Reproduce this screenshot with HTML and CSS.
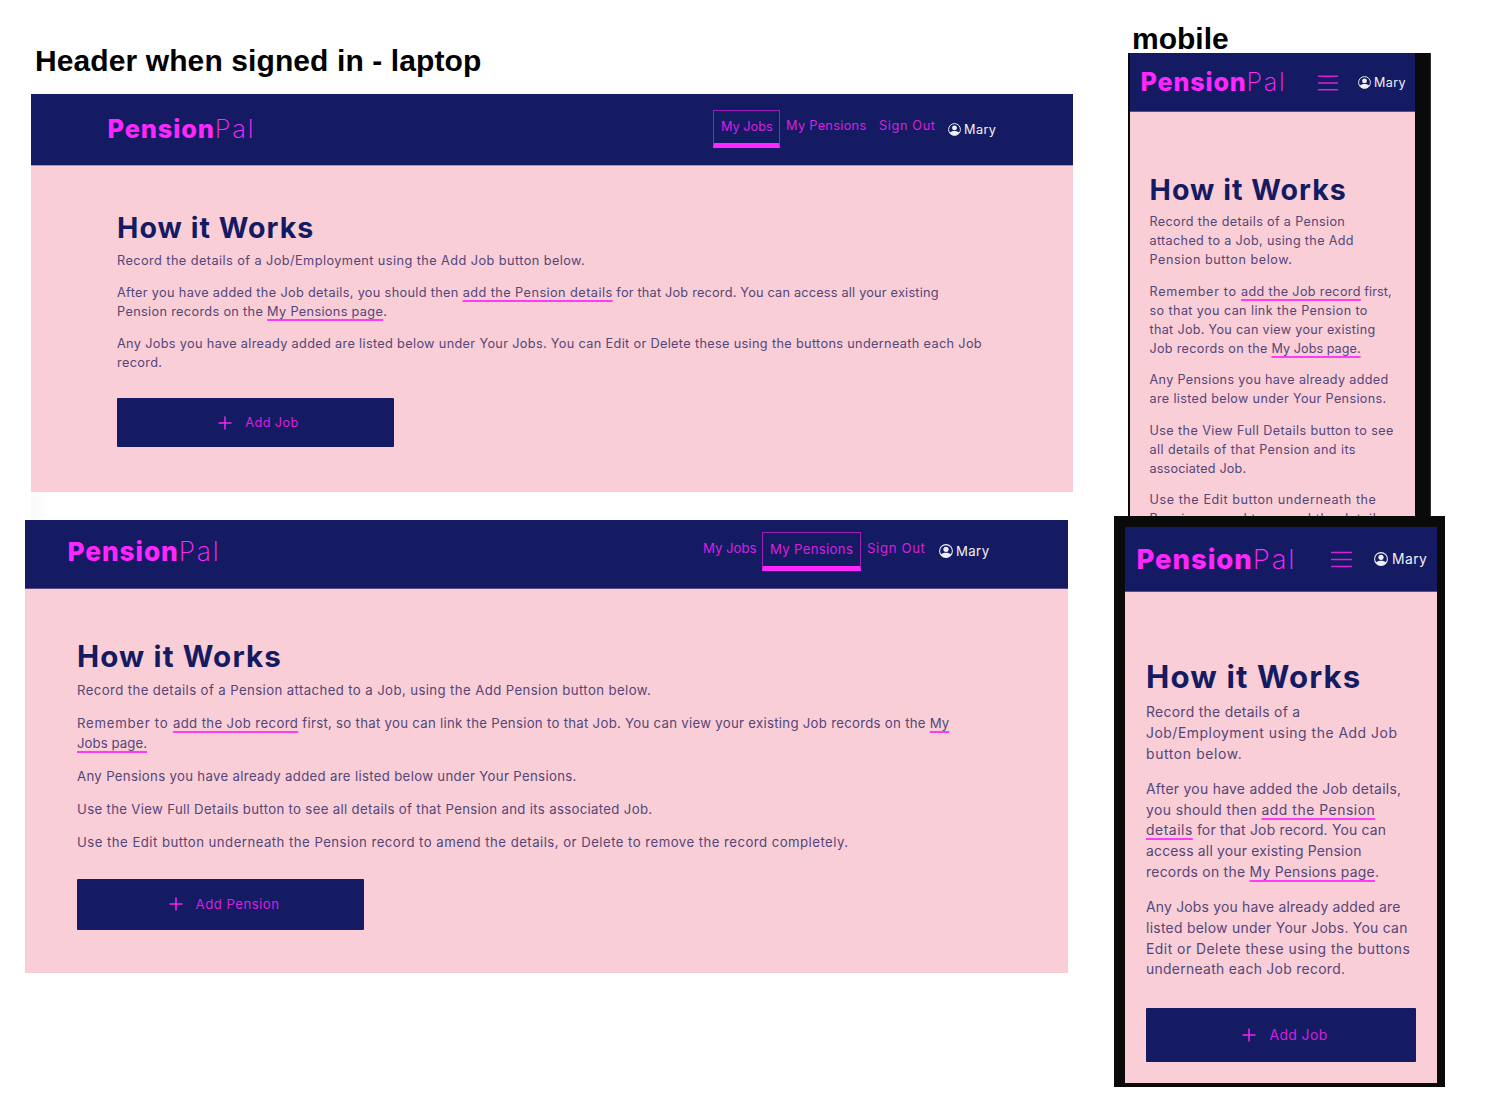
FILE: index.html
```html
<!DOCTYPE html>
<html lang="en">
<head>
<meta charset="utf-8">
<title>PensionPal header</title>
<link rel="stylesheet" href="styles.css">
</head>
<body>
<svg class="defs" aria-hidden="true">
  <symbol id="user" viewBox="0 0 16 16">
    <circle cx="8" cy="8" r="7.3" fill="none" stroke="currentColor" stroke-width="1.2"/>
    <circle cx="8" cy="6" r="3" fill="currentColor"/>
    <path d="M2 12C3.400 10.500 5.600 9.900 8 9.900s4.600.6 6 2.100A7 7 0 0 1 8 15.200 7 7 0 0 1 2 12z" fill="currentColor"/>
  </symbol>
  <symbol id="plus" viewBox="0 0 14 14"><path d="M7 1v12M1 7h12" fill="none" stroke="currentColor" stroke-width="1.500" stroke-linecap="round"/></symbol>
  <symbol id="menu" viewBox="0 0 20 16"><path d="M.6 1.300h18.800M.6 8h18.800M.6 14.700h18.800" fill="none" stroke="currentColor" stroke-width="1.500" stroke-linecap="round"/></symbol>
</svg>
<main class="board">
  <section class="column laptop-column">
    <h2 class="caption">Header when signed in - laptop</h2>

    <article class="screen laptop jobs">
      <header class="bar">
        <div class="logo"><b>Pension</b><span>Pal</span></div>
        <nav class="nav">
          <a class="item my-jobs active">My Jobs</a>
          <a class="item my-pensions">My Pensions</a>
          <a class="item sign-out">Sign Out</a>
        </nav>
        <div class="user"><svg class="user-icon"><use href="#user"/></svg><span>Mary</span></div>
      </header>
      <div class="content">
        <h1>How it Works</h1>
        <p class="ls-33">Record the details of a Job/Employment using the Add Job button below.</p>
        <p>After you have added the Job details, you should then <a class="link ls-33">add the Pension details</a><span class="ls-15"> for that Job record. You can access all your existing</span><br>Pension records on the <a class="link">My Pensions page</a>.</p>
        <p>Any Jobs you have already added are listed below under Your Jobs. You can Edit or Delete these using the buttons underneath each Job<br>record.</p>
        <button class="add"><svg class="plus-icon"><use href="#plus"/></svg><span>Add Job</span></button>
      </div>
    </article>

    <div class="divider"></div>

    <article class="screen laptop pensions">
      <header class="bar">
        <div class="logo"><b>Pension</b><span>Pal</span></div>
        <nav class="nav">
          <a class="item my-jobs">My Jobs</a>
          <a class="item my-pensions active">My Pensions</a>
          <a class="item sign-out">Sign Out</a>
        </nav>
        <div class="user"><svg class="user-icon"><use href="#user"/></svg><span>Mary</span></div>
      </header>
      <div class="content">
        <h1>How it Works</h1>
        <p class="ls-30">Record the details of a Pension attached to a Job, using the Add Pension button below.</p>
        <p class="ls-22"><span class="ls-56">Remember to </span><a class="link ls-28">add the Job record</a> first, so that you can link the Pension to that Job. You can view your existing Job records on the <a class="link ls-05">My<br>Jobs page.</a></p>
        <p>Any Pensions you have already added are listed below under Your Pensions.</p>
        <p>Use the View Full Details button to see all details of that Pension and its associated Job.</p>
        <p class="ls-35">Use the Edit button underneath the Pension record to amend the details, or Delete to remove the record completely.</p>
        <button class="add"><svg class="plus-icon"><use href="#plus"/></svg><span>Add Pension</span></button>
      </div>
    </article>
  </section>

  <section class="column mobile-column">
    <h2 class="caption">mobile</h2>

    <div class="device device-small">
      <article class="screen mobile pensions-mobile">
        <header class="bar">
          <div class="logo"><b>Pension</b><span>Pal</span></div>
          <svg class="menu-icon"><use href="#menu"/></svg>
          <div class="user"><svg class="user-icon"><use href="#user"/></svg><span>Mary</span></div>
        </header>
        <div class="content">
          <h1>How it Works</h1>
          <p class="ls-28">Record the details of a Pension<br>attached to a Job, using the Add<br><span class="ls-45">Pension button below.</span></p>
          <p><span class="ls-56">Remember to </span><a class="link ls-28">add the Job record</a><span class="ls-05"> first,</span><br><span class="ls-33">so that you can link the Pension to</span><br>that Job. You can view your existing<br>Job records on the <a class="link ls-05">My Jobs page.</a></p>
          <p class="ls-28">Any Pensions you have already added<br>are listed below under Your Pensions.</p>
          <p class="ls-33">Use the View Full Details button to see<br>all details of that Pension and its<br><span class="ls-15">associated Job.</span></p>
          <p class="ls-45">Use the Edit button underneath the<br>Pension record to amend the details,</p>
        </div>
      </article>
    </div>

    <div class="device device-large">
      <article class="screen mobile jobs-mobile">
        <header class="bar">
          <div class="logo"><b>Pension</b><span>Pal</span></div>
          <svg class="menu-icon"><use href="#menu"/></svg>
          <div class="user"><svg class="user-icon"><use href="#user"/></svg><span>Mary</span></div>
        </header>
        <div class="content">
          <h1>How it Works</h1>
          <p class="ls-22">Record the details of a<br><span class="ls-38">Job/Employment using the Add Job</span><br><span class="ls-45">button below.</span></p>
          <p class="ls-20">After you have added the Job details,<br><span class="ls-30">you should then </span><a class="link ls-38">add the Pension<br>details</a><span class="ls-15"> for that Job record. You can</span><br><span class="ls-15">access all your existing Pension</span><br>records on the <a class="link">My Pensions page</a>.</p>
          <p class="ls-15">Any Jobs you have already added are<br><span class="ls-20">listed below under Your Jobs. You can</span><br><span class="ls-35">Edit or Delete these using the buttons</span><br><span class="ls-22">underneath each Job record.</span></p>
          <button class="add"><svg class="plus-icon"><use href="#plus"/></svg><span>Add Job</span></button>
        </div>
      </article>
    </div>
  </section>
</main>
</body>
</html>
```
FILE: styles.css
```css
* { box-sizing: border-box; }

body {
  margin: 0;
  background: #fff;
  font-family: Inter, "Open Sans", sans-serif;
  overflow: hidden;
}

.defs { display: none; }

.board {
  display: flex;
  width: 1492px;
  height: 1112px;
}

.column {
  display: flex;
  flex-direction: column;
}

.laptop-column { width: 1114px; padding: 44px 0 0 25px; }
.mobile-column { padding-top: 22px; }

.caption {
  margin: 0;
  color: #000;
  font: 700 30px/34px "Liberation Sans", Arial, sans-serif;
  white-space: nowrap;
}

.laptop-column .caption { margin: 0 0 16px 10px; letter-spacing: 0.1px; }
.mobile-column .caption { margin: 0 0 -3px 18px; }

/* Screens */

.screen {
  display: flex;
  flex-direction: column;
  background: #f9ced6;
  overflow: hidden;
}

.jobs { width: 1042px; height: 398px; margin-left: 6px; font-size: 12.75px; }
.pensions { width: 1043px; height: 453px; font-size: 13.2px; }
.pensions-mobile { width: 285px; height: 463px; font-size: 12.6px; }
.jobs-mobile { width: 312px; height: 556px; font-size: 13.9px; }

.divider {
  width: 30px;
  height: 28px;
  margin-left: 6px;
  background: linear-gradient(90deg, #fafafa, #fff 70%);
}

.device { background: #0a0a0b; }
.device-small { width: 303px; height: 463px; margin-left: 14px; padding-left: 2px; border-right: 1px solid #333; }
.device-large { width: 331px; height: 571px; padding: 11px 0 0 11px; }

/* Header bar */

.bar {
  display: flex;
  flex: none;
  align-items: flex-start;
  background: #141b63;
  border-bottom: 1px solid #5b4b82;
}

.jobs .bar { height: 72px; padding-left: 76px; border-color: #b68fae; }
.pensions .bar { height: 69px; padding-left: 42px; }
.pensions-mobile .bar { height: 59px; padding-left: 10px; }
.jobs-mobile .bar { height: 65px; padding-left: 11px; }

.logo {
  flex: none;
  color: #ff26ff;
  font-size: 25.4px;
  line-height: 30px;
  text-indent: 0.5px;
  white-space: nowrap;
}

.logo b { font-weight: 800; letter-spacing: 0.034em; }
.logo span { font-weight: 200; letter-spacing: 0.07em; }

.jobs .logo { width: 606px; padding-top: 20px; }
.pensions .logo { width: 636px; padding-top: 17px; font-size: 26.3px; }
.pensions-mobile .logo { width: 178px; padding-top: 14px; font-size: 25.1px; }
.jobs-mobile .logo { width: 195px; padding-top: 17px; font-size: 27.5px; }

.nav { display: flex; align-items: flex-start; }

.item {
  color: #d81fdf;
  line-height: 20px;
  white-space: nowrap;
}

.my-pensions { letter-spacing: 0.024em; }
.sign-out { letter-spacing: 0.048em; }

.item.active {
  height: 38px;
  padding: 6px 0 0 7px;
  border: 1px solid #9c1fb8;
  border-bottom: 5px solid #ff26ff;
}

.jobs .nav { width: 235px; padding-top: 16px; }
.jobs .item { margin-top: 6px; }
.jobs .item.active { width: 67px; margin-top: 0; }
.jobs .my-pensions { width: 93px; margin-left: 6px; }

.pensions .nav { width: 236px; padding-top: 12px; }
.pensions .item { margin-top: 6px; }
.pensions .my-jobs { width: 59px; }
.pensions .item.active { width: 99px; height: 39px; margin-top: 0; }
.pensions .sign-out { margin-left: 6px; }

.user {
  display: flex;
  align-items: center;
  gap: 3px;
  height: 20px;
  color: #f0f0f6;
  letter-spacing: 0.03em;
}

.user-icon { width: 13px; height: 13px; }
.jobs .user { margin-top: 25px; }
.pensions .user { margin-top: 21px; }
.pensions .user-icon { width: 14px; height: 14px; }
.pensions-mobile .user { margin: 19px 0 0 20px; }
.jobs-mobile .user { margin: 22px 0 0 22px; gap: 4px; }
.jobs-mobile .user-icon { width: 14px; height: 14px; }

.menu-icon { width: 20px; height: 16px; color: #d81fdf; }
.pensions-mobile .menu-icon { margin-top: 22px; }
.jobs-mobile .menu-icon { width: 21px; height: 17px; margin-top: 24px; }

/* Page copy */

.content { color: #544679; white-space: nowrap; }

.jobs .content { padding: 44px 0 0 86px; }
.pensions .content { padding: 49px 0 0 52px; }
.pensions-mobile .content { padding: 60px 0 0 19.500px; }
.jobs-mobile .content { padding: 67px 0 0 21px; }

h1 {
  margin: 0;
  color: #141b63;
  font-size: 28.6px;
  font-weight: 700;
  line-height: 36px;
  letter-spacing: 0.036em;
}

.jobs h1 { height: 41px; }
.pensions h1 { height: 42.8px; font-size: 29.600px; letter-spacing: 0.038em; }
.pensions-mobile h1 { height: 41.200px; }
.jobs-mobile h1 { height: 43.2px; font-size: 31.2px; }

p {
  margin: 0 0 1em;
  line-height: 1.5;
  letter-spacing: 0.025em;
}

.pensions-mobile p { line-height: 1.507; }

.link {
  text-decoration: underline #ff3cf5 1.8px;
  text-decoration-skip-ink: none;
  text-underline-offset: 3px;
}

.add {
  display: flex;
  align-items: center;
  justify-content: center;
  gap: 13px;
  padding: 0;
  border: 0;
  border-radius: 1px;
  background: #141b63;
  color: #d81fdf;
  font: inherit;
  letter-spacing: 0.03em;
}

.plus-icon { width: 14px; height: 14px; color: #f026f2; }

.jobs .add { width: 277px; height: 49px; margin-top: 26px; padding-left: 6px; }
.pensions .add { width: 287px; height: 51px; margin-top: 27px; padding: 0 0 1px 7px; letter-spacing: 0.036em; }
.jobs-mobile .add { width: 270px; height: 54px; margin-top: 28px; padding: 0 0 1px 8px; }

/* Tracking steps */

.ls-05 { letter-spacing: 0.005em; }
.ls-15 { letter-spacing: 0.015em; }
.ls-20 { letter-spacing: 0.02em; }
.ls-22 { letter-spacing: 0.022em; }
.ls-28 { letter-spacing: 0.028em; }
.ls-30 { letter-spacing: 0.03em; }
.ls-33 { letter-spacing: 0.033em; }
.ls-35 { letter-spacing: 0.035em; }
.ls-38 { letter-spacing: 0.038em; }
.ls-45 { letter-spacing: 0.045em; }
.ls-56 { letter-spacing: 0.056em; }
```
